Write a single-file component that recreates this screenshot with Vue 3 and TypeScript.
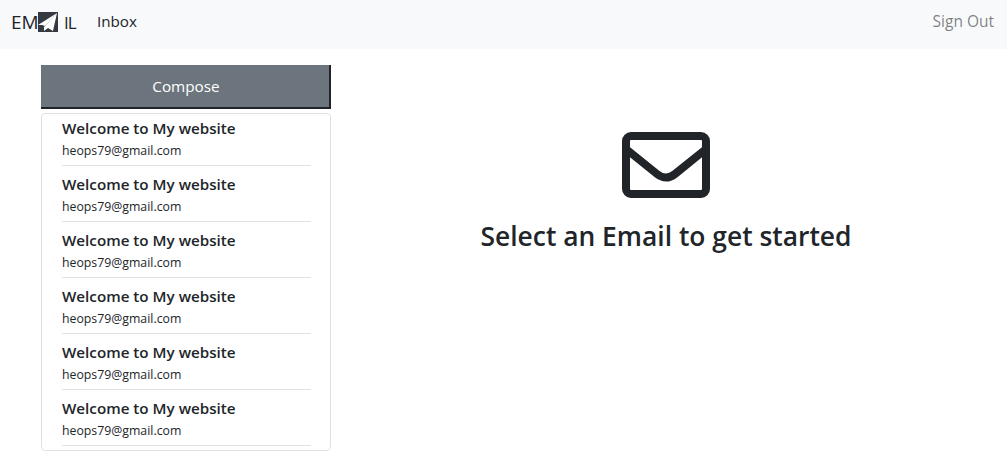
<template>
  <div class="page">
    <nav class="navbar">
      <a class="brand">
        <span class="em">EM</span>
        <svg class="logo" width="20" height="20" viewBox="0 0 20 20">
          <rect width="20" height="20" fill="#343a40" />
          <path d="M0 13 L19 1 L7 14 L4 13 Z" fill="#fff" />
          <path d="M19 1 L15 19 L10 16 L6 19 L6 15 Z" fill="#fff" />
        </svg>
        <span class="il">IL</span>
      </a>
      <a class="inbox">Inbox</a>
      <a class="signout">Sign Out</a>
    </nav>
    <main class="content">
      <aside class="sidebar">
        <button class="compose">Compose</button>
        <ul class="mail-list">
          <li v-for="mail in mails" :key="mail.id" class="mail">
            <h5>{{ mail.subject }}</h5>
            <p>{{ mail.from }}</p>
          </li>
        </ul>
      </aside>
      <section class="empty">
        <svg class="envelope" width="88" height="66" viewBox="0 0 88 66">
          <rect x="4" y="4" width="80" height="58" rx="5" fill="none" stroke="#212529" stroke-width="8" />
          <path d="M4 17 L35 42 Q44 49 53 42 L84 17" fill="none" stroke="#212529" stroke-width="8" />
        </svg>
        <h3>Select an Email to get started</h3>
      </section>
    </main>
  </div>
</template>

<script setup lang="ts">
interface Mail {
  id: number
  subject: string
  from: string
}

const mails: Mail[] = Array.from({ length: 6 }, (_, i) => ({
  id: i,
  subject: 'Welcome to My website',
  from: 'heops79@gmail.com'
}))
</script>

<style>
html,
body {
  margin: 0;
  background: #fff;
}
</style>

<style scoped>
.page {
  font-family: 'Open Sans', 'Noto Sans', sans-serif;
  color: #212529;
}

.navbar {
  display: flex;
  align-items: center;
  height: 49px;
  box-sizing: border-box;
  padding: 0 13px 5px 11px;
  background: #f8f9fa;
}

.brand {
  display: flex;
  align-items: center;
  width: 86px;
  font-size: 19px;
  color: #212529;
}

.em {
  width: 27px;
}

.il {
  margin-left: 6px;
  font-size: 17px;
  letter-spacing: -1px;
}

.inbox {
  margin-bottom: 2px;
  font-size: 15.2px;
}

.signout {
  margin: 0 0 2px auto;
  font-size: 15.5px;
  color: rgba(0, 0, 0, 0.5);
}

.content {
  display: flex;
}

.sidebar {
  width: 290px;
  margin: 16px 0 0 41px;
}

.compose {
  display: block;
  width: 100%;
  height: 44px;
  padding: 0 0 0 2px;
  background: #6c757d;
  color: #fff;
  font: inherit;
  font-size: 15.3px;
  border: none;
  border-right: 2px solid #212529;
  border-bottom: 2px solid #212529;
}

.mail-list {
  list-style: none;
  margin: 4px 0 0;
  padding: 0 19px 4px 20px;
  border: 1px solid #dee2e6;
  border-radius: 4px;
}

.mail {
  height: 51px;
  border-bottom: 1px solid #dee2e6;
}

.mail + .mail {
  margin-top: 4px;
}

.mail h5 {
  margin: 0;
  padding-top: 3px;
  font-size: 15.2px;
  line-height: 22px;
  font-weight: 600;
}

.mail p {
  margin: 0;
  padding-top: 3px;
  font-size: 12.3px;
  line-height: 18px;
}

.empty {
  flex: 1;
  display: flex;
  flex-direction: column;
  align-items: center;
  padding: 83px 6px 0 0;
}

.envelope {
  display: block;
}

.empty h3 {
  margin: 21px 0 0;
  font-size: 26.4px;
  line-height: 34px;
  font-weight: 600;
}
</style>
